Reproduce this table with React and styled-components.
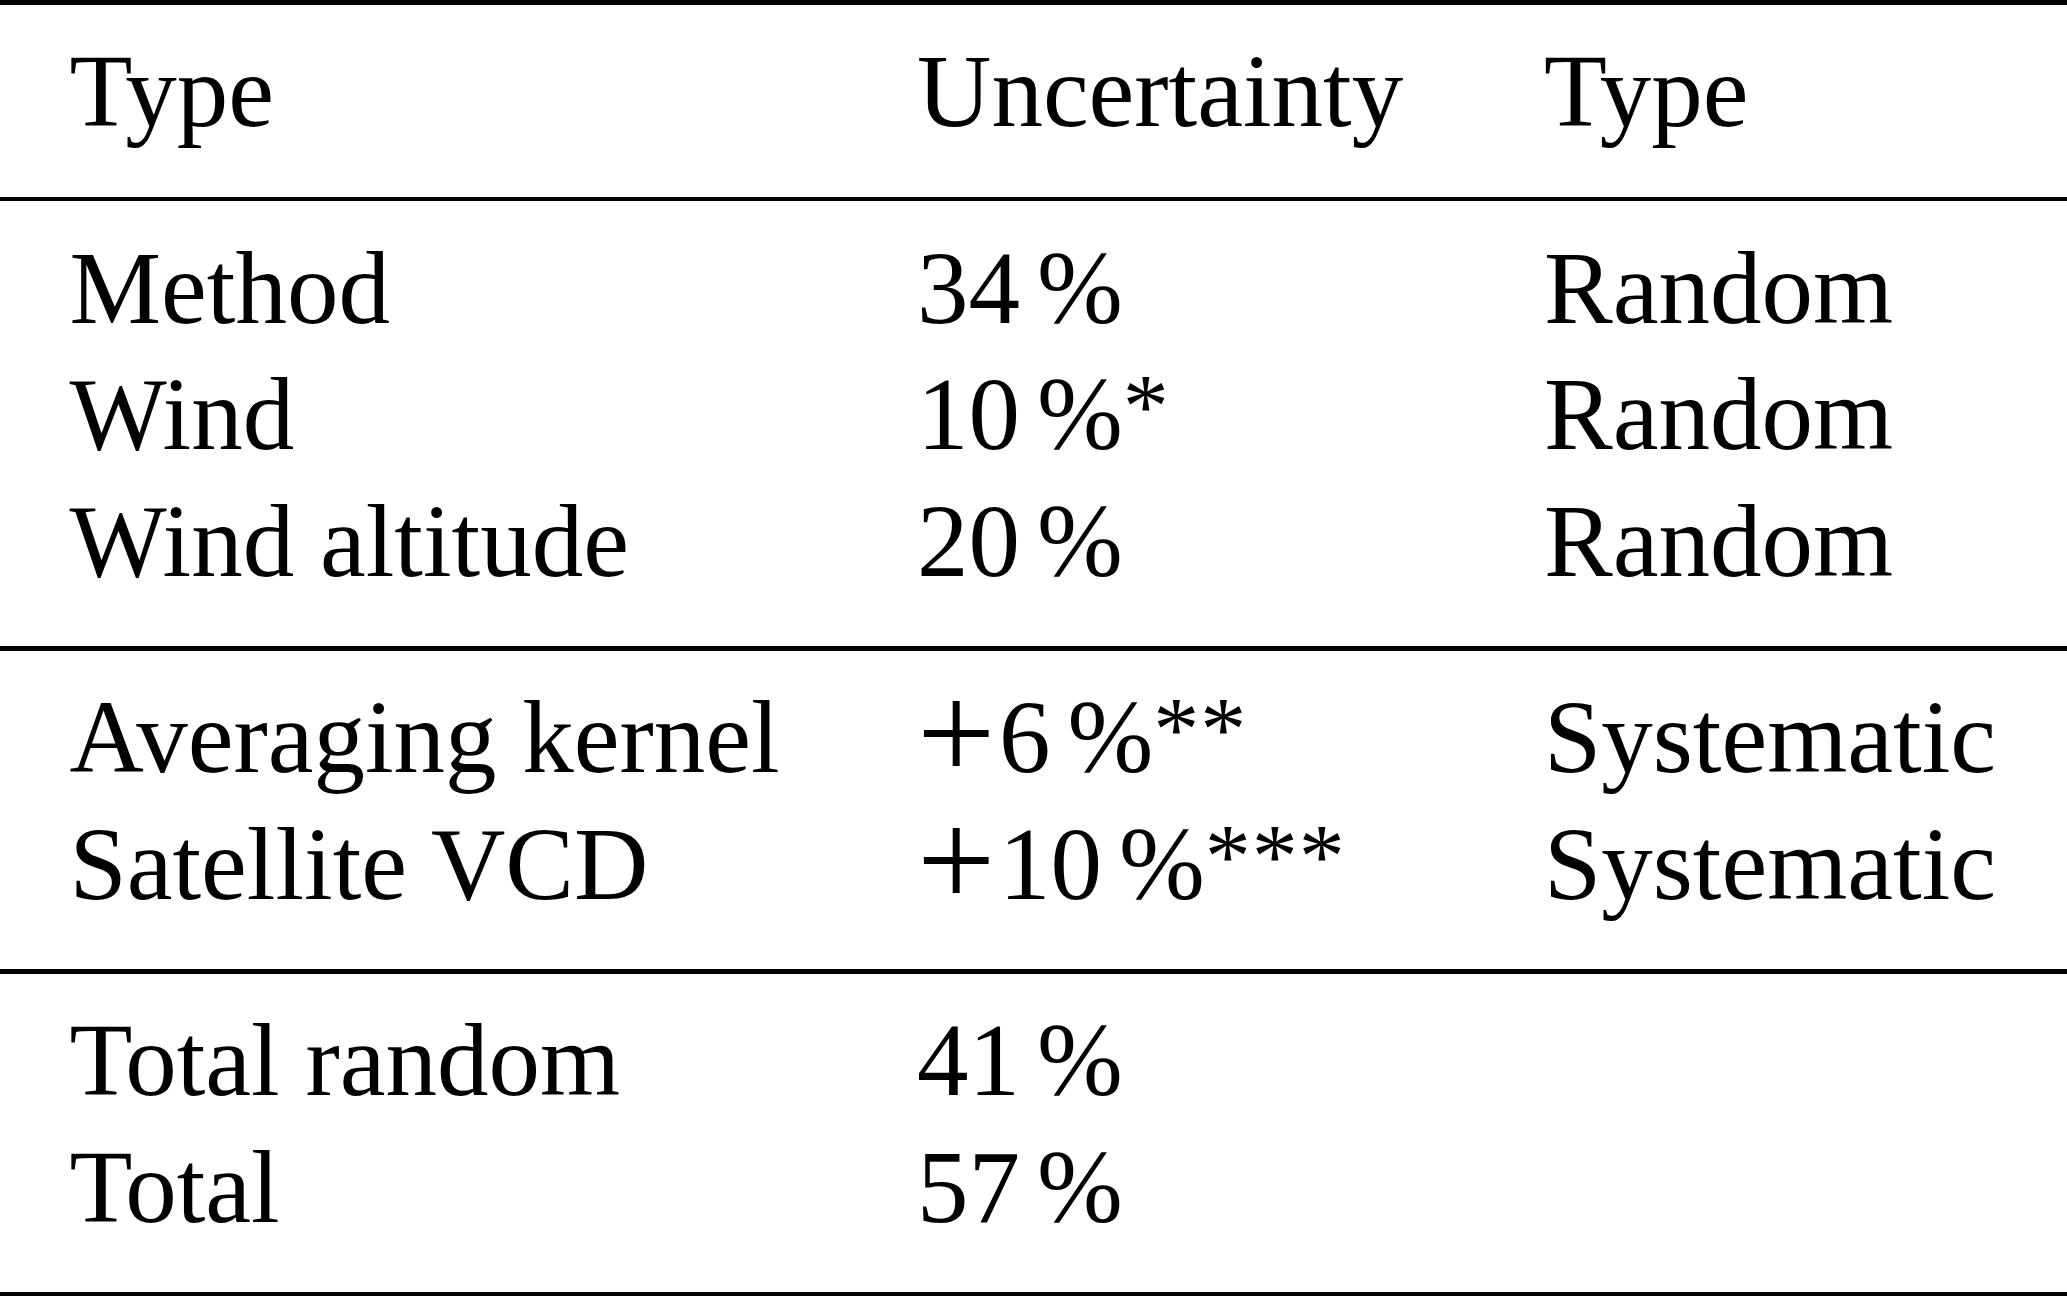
import React from "react";
import styled, { createGlobalStyle } from "styled-components";

const Global = createGlobalStyle`
  html, body {
    margin: 0;
    padding: 0;
    background: #ffffff;
    overflow: hidden;
  }
  body {
    font-family: "Liberation Serif", "Times New Roman", serif;
    color: #000000;
  }
`;

const Table = styled.div`
  width: 2067px;
  display: flex;
  flex-direction: column;
`;

const Rule = styled.div`
  height: 4.5px;
  background: #000000;
`;

const Section = styled.div`
  padding: 23.5px 0 42px 69.5px;
`;

const Row = styled.div`
  display: grid;
  grid-template-columns: 847.5px 627px 1fr;
  font-size: 103px;
  line-height: 126.5px;
  white-space: nowrap;
`;

const Cell = styled.div``;

const Plus = styled.span`
  font-size: 139px;
  line-height: 0;
  vertical-align: -8px;
  margin-right: 3.5px;
`;

const Pct = styled.span`
  margin-left: 0.165em;
`;

const Stars = styled.span`
  font-size: 92px;
  line-height: 0;
  vertical-align: 12px;
  letter-spacing: 1px;
`;

const header = ["Type", "Uncertainty", "Type"];

const sections = [
  [
    { name: "Method", num: "34", type: "Random" },
    { name: "Wind", num: "10", stars: 1, type: "Random" },
    { name: "Wind altitude", num: "20", type: "Random" },
  ],
  [
    { name: "Averaging kernel", plus: true, num: "6", stars: 2, type: "Systematic" },
    { name: "Satellite VCD", plus: true, num: "10", stars: 3, type: "Systematic" },
  ],
  [
    { name: "Total random", num: "41", type: "" },
    { name: "Total", num: "57", type: "" },
  ],
];

function Value({ plus, num, stars }) {
  return (
    <>
      {plus && <Plus>+</Plus>}
      {num}
      <Pct>%</Pct>
      {stars ? <Stars>{"*".repeat(stars)}</Stars> : null}
    </>
  );
}

export default function App() {
  return (
    <>
      <Global />
      <Table>
        <Rule />
        <Section>
          <Row>
            {header.map((h, i) => (
              <Cell key={i}>{h}</Cell>
            ))}
          </Row>
        </Section>
        {sections.map((rows, si) => (
          <React.Fragment key={si}>
            <Rule />
            <Section>
              {rows.map((r, ri) => (
                <Row key={ri}>
                  <Cell>{r.name}</Cell>
                  <Cell>
                    <Value plus={r.plus} num={r.num} stars={r.stars} />
                  </Cell>
                  <Cell>{r.type}</Cell>
                </Row>
              ))}
            </Section>
          </React.Fragment>
        ))}
        <Rule />
      </Table>
    </>
  );
}
